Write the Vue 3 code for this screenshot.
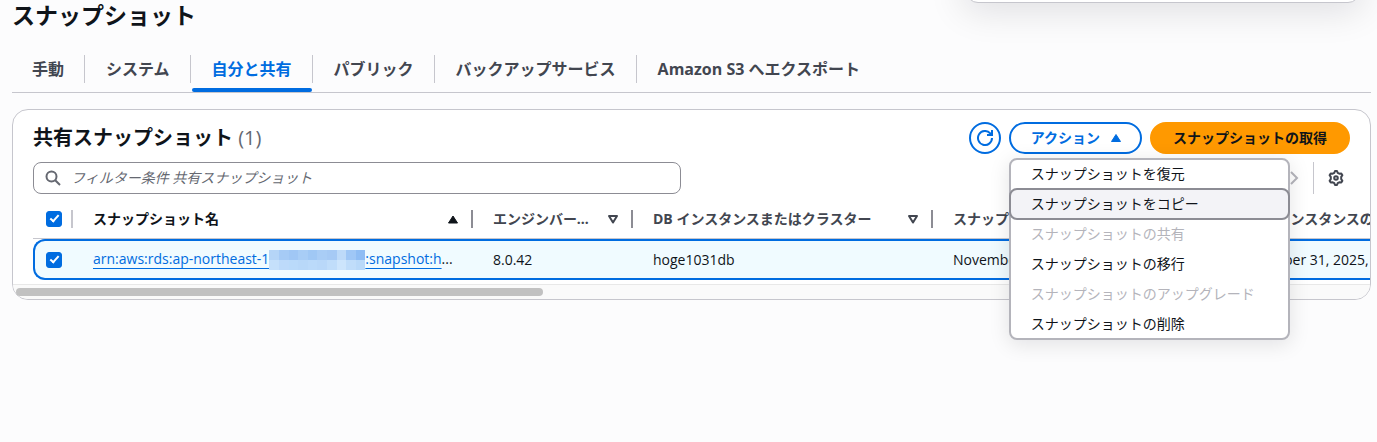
<script setup>
import { ref } from 'vue'

const tabs = ['手動', 'システム', '自分と共有', 'パブリック', 'バックアップサービス', 'Amazon S3 へエクスポート']
const activeTab = ref(2)

const actions = [
  { label: 'スナップショットを復元' },
  { label: 'スナップショットをコピー' },
  { label: 'スナップショットの共有', disabled: true },
  { label: 'スナップショットの移行' },
  { label: 'スナップショットのアップグレード', disabled: true },
  { label: 'スナップショットの削除' },
]
const highlighted = ref(1)
const menuOpen = ref(true)

const columns = [
  { key: 'name', label: 'スナップショット名', sort: 'asc' },
  { key: 'engine', label: 'エンジンバージョン', sort: 'none' },
  { key: 'db', label: 'DB インスタンスまたはクラスター', sort: 'none' },
  { key: 'created', label: 'スナップショットの作成時刻', sort: 'none' },
  { key: 'dbCreated', label: 'DB インスタンスの作成時刻', sort: 'none' },
]
const allSelected = ref(true)
const rowSelected = ref(true)
const filter = ref('')

const mosaic = [
  '#b5d5f7', '#a6cbf6', '#a0c7f5', '#a8cdf6', '#a0c8f5', '#a9cdf6', '#a6caf5', '#bddaf9', '#9fc7f6', '#8fbdf4',
  '#c5e0fb', '#bddafa', '#badafa', '#b8d8f9', '#bbdafa', '#b9d8f9', '#c0ddfa', '#cde5fc', '#c0ddfa', '#b9d9f9',
]
</script>

<template>
  <div class="page">
    <div class="flash"></div>
    <h1>スナップショット</h1>

    <div class="tabs" role="tablist">
      <div v-for="(tab, i) in tabs" :key="tab" class="tab-item">
        <button
          type="button"
          role="tab"
          class="tab"
          :class="{ active: i === activeTab }"
          :aria-selected="i === activeTab"
          @click="activeTab = i"
        >{{ tab }}</button>
      </div>
    </div>

    <section class="panel">
      <header class="panel-head">
        <h2>共有スナップショット <span class="count">(1)</span></h2>
        <div class="buttons">
          <button type="button" class="btn round" aria-label="更新">
            <svg viewBox="0 0 16 16" width="16" height="16" fill="none" stroke="currentColor" stroke-width="2">
              <path d="M15 8A7 7 0 1 1 13.2 3.3L15 5" />
              <path d="M10 5h5V0" />
            </svg>
          </button>
          <div class="dropdown">
            <button type="button" class="btn outline" :aria-expanded="menuOpen" @click="menuOpen = !menuOpen">
              アクション
              <svg viewBox="0 0 16 16" width="16" height="16"><path d="M8 4.5l4.500 7h-9z" fill="currentColor" stroke="currentColor" stroke-linejoin="round" /></svg>
            </button>
            <ul v-if="menuOpen" class="menu" role="menu">
              <li v-for="(a, i) in actions" :key="a.label" role="none">
                <button
                  type="button"
                  role="menuitem"
                  class="menu-item"
                  :class="{ highlighted: i === highlighted }"
                  :disabled="a.disabled"
                  @mouseenter="highlighted = i"
                >{{ a.label }}</button>
              </li>
            </ul>
          </div>
          <button type="button" class="btn primary">スナップショットの取得</button>
        </div>
      </header>

      <div class="tools">
        <div class="search">
          <svg viewBox="0 0 16 16" width="16" height="16" fill="none" stroke="currentColor" stroke-width="2">
            <circle cx="6.5" cy="6.5" r="5" />
            <path d="M10.2 10.2L15 15" />
          </svg>
          <input v-model="filter" type="text" aria-label="フィルター条件" placeholder="フィルター条件 共有スナップショット" />
        </div>
        <div class="paging">
          <button type="button" class="icon-btn next" aria-label="次のページ" disabled>
            <svg viewBox="0 0 16 16" width="16" height="16" fill="none" stroke="currentColor" stroke-width="2"><path d="M4 2l6 6-6 6" /></svg>
          </button>
          <span class="rule"></span>
          <button type="button" class="icon-btn" aria-label="設定">
            <svg viewBox="0 0 16 16" width="16" height="16" fill="none" stroke="currentColor" stroke-width="2" stroke-linejoin="round">
              <path d="M6.3 2.8L7 1h2l.7 1.8 1.6.9 2-.3 1.1 1.8L13.200 6.900v2.200l1.200 1.700-1.100 1.800-2-.3-1.600.9L9 15H7l-.7-1.800-1.600-.9-2 .3-1.100-1.800L2.800 9.100V6.900L1.600 5.200l1.100-1.800 2 .3z" />
              <circle cx="8" cy="8" r="1.800" />
            </svg>
          </button>
        </div>
      </div>

      <div class="table-scroll">
        <table>
          <colgroup>
            <col class="c-check" />
            <col class="c-name" />
            <col class="c-engine" />
            <col class="c-wide" />
            <col class="c-wide" />
            <col class="c-wide" />
          </colgroup>
          <thead>
            <tr>
              <th scope="col" class="check">
                <input v-model="allSelected" type="checkbox" aria-label="すべて選択" />
              </th>
              <th v-for="c in columns" :key="c.key" scope="col" :class="{ sorted: c.sort === 'asc' }">
                <div class="th">
                  <span class="th-label">{{ c.label }}</span>
                  <svg viewBox="0 0 16 16" width="16" height="16">
                    <path v-if="c.sort === 'asc'" d="M8 5l4.500 7h-9z" fill="currentColor" stroke="currentColor" stroke-linejoin="round" />
                    <path v-else d="M4 5h8l-4 6.500z" fill="none" stroke="currentColor" stroke-width="2" stroke-linejoin="round" />
                  </svg>
                </div>
              </th>
            </tr>
          </thead>
          <tbody>
            <tr>
              <td class="check"><input v-model="rowSelected" type="checkbox" aria-label="スナップショットを選択" /></td>
              <td>
                <div class="arn"><a href="#">arn:aws:rds:ap-northeast-1<span class="mosaic"><i v-for="(m, i) in mosaic" :key="i" :style="{ background: m }"></i></span>:snapshot:h</a>...</div>
              </td>
              <td>8.0.42</td>
              <td>hoge1031db</td>
              <td>November 01, 2025, 10:00</td>
              <td>October 31, 2025, 21:00</td>
            </tr>
          </tbody>
        </table>
      </div>
      <div class="scrollbar"><div class="thumb"></div></div>
    </section>
  </div>
</template>

<style>
html {
  background: #fcfcfd;
}
</style>

<style scoped>
.page {
  position: relative;
  box-sizing: border-box;
  min-height: 100vh;
  overflow: hidden;
  padding: 0 6px 16px 12px;
  font-family: "Open Sans", "Noto Sans CJK JP", sans-serif;
  font-size: 14px;
  line-height: 20px;
  color: #0f141a;
}
button,
input {
  font: inherit;
  color: inherit;
  margin: 0;
}
button {
  padding: 0;
  border: 0;
  background: none;
  white-space: nowrap;
}
svg {
  display: block;
  flex: none;
}
h1 {
  margin: 0;
  font-size: 23px;
  line-height: 30px;
  font-weight: 700;
}
.flash {
  position: absolute;
  top: -29px;
  right: 17px;
  width: 394px;
  height: 32px;
  box-sizing: border-box;
  border: 1px solid #c6c6cd;
  border-radius: 12px;
  background: #fff;
  box-shadow: 0 4px 36px 4px rgba(0, 7, 22, 0.12);
}

.tabs {
  display: flex;
  margin-top: 18px;
  border-bottom: 1px solid #c6c6cd;
}
.tab-item {
  position: relative;
  display: flex;
  align-items: flex-start;
  height: 44px;
  padding: 0 1px 0 0;
}
.tab-item:not(:last-child)::after {
  content: "";
  width: 1px;
  height: 28px;
  margin-top: 7px;
  background: #c6c6cd;
}
.tab {
  position: relative;
  height: 44px;
  padding: 0 20px 2px;
  font-size: 16px;
  font-weight: 700;
  color: #424650;
}
.tab.active {
  color: #006ce0;
}
.tab.active::after {
  content: "";
  position: absolute;
  left: 0;
  right: 0;
  bottom: 0;
  height: 4px;
  border-radius: 2px;
  background: #006ce0;
}

.panel {
  margin-top: 16px;
  border: 1px solid #c6c6cd;
  border-radius: 16px;
  background: #fff;
}
.panel-head {
  display: flex;
  justify-content: space-between;
  padding: 12px 20px 0;
}
h2 {
  margin: 0;
  font-size: 20px;
  line-height: 32px;
  font-weight: 700;
}
.count {
  font-weight: 400;
  color: #656871;
}
.buttons {
  display: flex;
  gap: 8px;
}
.btn {
  display: flex;
  align-items: center;
  justify-content: center;
  gap: 8px;
  box-sizing: border-box;
  height: 32px;
  padding: 0 20px;
  border: 2px solid #006ce0;
  border-radius: 16px;
  background: #fff;
  color: #006ce0;
  font-weight: 700;
}
.round {
  width: 32px;
  padding: 0;
}
.outline {
  padding-right: 16px;
}
.primary {
  padding: 0 21px;
  border-color: #ff9900;
  background: #ff9900;
  color: #0f141a;
}
.dropdown {
  position: relative;
}
.menu {
  position: absolute;
  z-index: 5;
  top: 36px;
  left: 0;
  width: 281px;
  box-sizing: border-box;
  margin: 0;
  padding: 0;
  list-style: none;
  border: 2px solid #b4b4bb;
  border-radius: 8px;
  background: #fff;
  box-shadow: 0 4px 20px 1px rgba(0, 7, 22, 0.1);
}
.menu li {
  margin: -2px -2px 0;
}
.menu li:last-child {
  margin-bottom: -2px;
}
.menu-item {
  display: block;
  box-sizing: border-box;
  width: 100%;
  height: 32px;
  padding: 0 20px;
  border: 2px solid transparent;
  border-radius: 8px;
  text-align: left;
}
.menu-item:disabled {
  color: #b4b4bb;
}
.menu-item.highlighted {
  border-color: #8c8c94;
  background: #f3f3f7;
}

.tools {
  display: flex;
  justify-content: space-between;
  padding: 8px 20px 0;
}
.search {
  display: flex;
  flex: 1;
  align-items: center;
  gap: 10px;
  max-width: 648px;
  height: 32px;
  box-sizing: border-box;
  padding: 0 11px;
  border: 1px solid #8c8c94;
  border-radius: 8px;
  color: #656871;
}
.search input {
  flex: 1;
  min-width: 0;
  padding: 0;
  border: 0;
  outline: 0;
  background: none;
}
.search input::placeholder {
  color: #656871;
  font-style: italic;
  opacity: 1;
}
.paging {
  display: flex;
  align-items: center;
}
.rule {
  width: 1px;
  height: 32px;
  margin: 0 14px 0 10px;
  background: #c6c6cd;
}
.icon-btn {
  color: #424650;
}
.next {
  color: #b4b4bb;
}
.paging .icon-btn:last-child {
  margin-right: 6px;
}

.table-scroll {
  overflow: hidden;
  margin-top: 5px;
  padding: 0 0 4px 20px;
}
table {
  table-layout: fixed;
  width: 1500px;
  border-collapse: separate;
  border-spacing: 0;
}
.c-check {
  width: 40px;
}
.c-name {
  width: 400px;
}
.c-engine {
  width: 160px;
}
.c-wide {
  width: 300px;
}
th,
td {
  box-sizing: border-box;
  padding: 0 20px;
  text-align: left;
  font-weight: 400;
  white-space: nowrap;
}
th {
  position: relative;
  height: 40px;
  border-bottom: 1px solid #c6c6cd;
  font-weight: 700;
  color: #424650;
}
th.sorted {
  color: #0f141a;
}
th:not(:last-child)::after {
  content: "";
  position: absolute;
  right: 0;
  top: 11px;
  width: 2px;
  height: 18px;
  background: #8c8c94;
}
th.check::after {
  background: #c6c6cd;
}
.th {
  display: flex;
  align-items: center;
  justify-content: space-between;
  gap: 10px;
  margin-right: -8px;
}
.th-label {
  overflow: hidden;
  text-overflow: ellipsis;
}
td {
  height: 41px;
  border: 2px solid #006ce0;
  border-width: 2px 0;
  background: #f0fbff;
}
td.check {
  border-left-width: 2px;
  border-radius: 12px 0 0 12px;
}
.check {
  padding: 0 0 0 13px;
}
td.check {
  padding-left: 11px;
}
input[type="checkbox"] {
  appearance: none;
  display: block;
  width: 16px;
  height: 16px;
  border: 1px solid #8c8c94;
  border-radius: 3px;
  background: #fff;
}
input[type="checkbox"]:checked {
  display: grid;
  place-items: center;
  border-color: #006ce0;
  background: #006ce0;
}
input[type="checkbox"]:checked::after {
  content: "";
  width: 7px;
  height: 3px;
  margin-bottom: 3px;
  border: solid #fff;
  border-width: 0 0 2px 2px;
  transform: rotate(-48deg);
}
.arn a {
  color: #006ce0;
  text-decoration: underline;
  text-underline-offset: 4px;
  text-decoration-thickness: 1px;
}
.mosaic {
  display: inline-grid;
  grid-template-columns: repeat(10, 1fr);
  grid-auto-rows: 10px;
  width: 96px;
  height: 20px;
  vertical-align: middle;
}
.scrollbar {
  box-sizing: border-box;
  height: 15px;
  padding: 3px;
  border-top: 1px solid #e8e8e8;
  border-radius: 0 0 15px 15px;
  background: #fafafa;
}
.thumb {
  width: 39%;
  height: 8px;
  border-radius: 4px;
  background: #c1c1c1;
}
</style>
